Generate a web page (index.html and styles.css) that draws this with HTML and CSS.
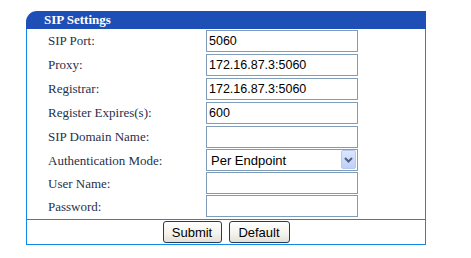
FILE: index.html
```
<!DOCTYPE html>
<html>
<head>
<meta charset="utf-8">
<link rel="stylesheet" href="styles.css">
</head>
<body>
<div class="panel">
  <div class="panel-head">SIP Settings</div>
  <div class="panel-body">
    <div class="form">
      <div class="row"><span class="label">SIP Port:</span><input class="field" type="text" value="5060"></div>
      <div class="row"><span class="label">Proxy:</span><input class="field" type="text" value="172.16.87.3:5060"></div>
      <div class="row"><span class="label">Registrar:</span><input class="field" type="text" value="172.16.87.3:5060"></div>
      <div class="row"><span class="label">Register Expires(s):</span><input class="field" type="text" value="600"></div>
      <div class="row"><span class="label">SIP Domain Name:</span><input class="field" type="text" value=""></div>
      <div class="row row-s"><span class="label">Authentication Mode:</span>
        <div class="select-wrap">
          <select class="select"><option>Per Endpoint</option></select>
          <span class="select-btn"><svg width="9" height="6" viewBox="0 0 9 6"><path d="M1 1 L4.5 4.5 L8 1" fill="none" stroke="#4d6185" stroke-width="2"/></svg></span>
        </div>
      </div>
      <div class="row row-s"><span class="label">User Name:</span><input class="field" type="text" value=""></div>
      <div class="row row-s"><span class="label">Password:</span><input class="field" type="password" value=""></div>
    </div>
    <div class="actions">
      <button class="btn btn-submit" type="button">Submit</button>
      <button class="btn btn-default" type="button">Default</button>
    </div>
  </div>
</div>
</body>
</html>
```
FILE: styles.css
```
html, body {
  margin: 0;
  background: #fff;
}
body {
  padding: 11px 0 0 26px;
  font-family: "Liberation Serif", "Times New Roman", serif;
}
.panel {
  width: 400px;
}
.panel-head {
  height: 18px;
  line-height: 18px;
  background: #1d4fb6;
  border-top-left-radius: 11px;
  color: #fff;
  font-weight: bold;
  font-size: 13px;
  padding-left: 18px;
}
.panel-body {
  border: 1px solid #1289e6;
  border-top: none;
}
.form {
  padding-bottom: 1px;
}
.row {
  display: grid;
  grid-template-columns: 179px 152px;
  align-items: center;
  height: 24px;
}
.row-s {
  height: 23px;
}
.label {
  padding-left: 21px;
  font-size: 13px;
  color: #28304a;
}
.field {
  box-sizing: border-box;
  width: 152px;
  height: 22px;
  margin: 0;
  border: 1px solid #7f9db9;
  padding: 0 2px;
  font-family: "Liberation Sans", Arial, sans-serif;
  font-size: 12.5px;
  color: #000;
  outline: none;
  background: #fff;
}
.row-s .field {
  align-self: start;
}
.select-wrap {
  position: relative;
  width: 152px;
  height: 22px;
  align-self: start;
}
.select {
  appearance: none;
  -webkit-appearance: none;
  box-sizing: border-box;
  width: 152px;
  height: 22px;
  margin: 0;
  border: 1px solid #7f9db9;
  border-radius: 0;
  padding: 0 0 0 4px;
  background: #fff;
  font-family: "Liberation Sans", Arial, sans-serif;
  font-size: 13px;
  color: #000;
  outline: none;
}
.select-btn {
  position: absolute;
  top: 1px;
  right: 2px;
  width: 15px;
  height: 19px;
  box-sizing: border-box;
  border: 1px solid #b7c9f2;
  border-radius: 2px;
  background: linear-gradient(#dbe6fe, #bdd0fa);
  display: flex;
  align-items: center;
  justify-content: center;
  pointer-events: none;
}
.actions {
  border-top: 1px solid #1289e6;
  display: flex;
  justify-content: center;
  gap: 7px;
  padding: 1px 0 1px;
}
.btn {
  box-sizing: border-box;
  height: 22px;
  margin: 0;
  padding: 0;
  border: 1px solid #1f3d65;
  border-radius: 3px;
  background: linear-gradient(#ffffff, #f3f2ec 60%, #e3e0d6);
  font-family: "Liberation Sans", Arial, sans-serif;
  font-size: 13px;
  color: #000;
}
.btn-submit {
  width: 59px;
}
.btn-default {
  width: 61px;
}
```
